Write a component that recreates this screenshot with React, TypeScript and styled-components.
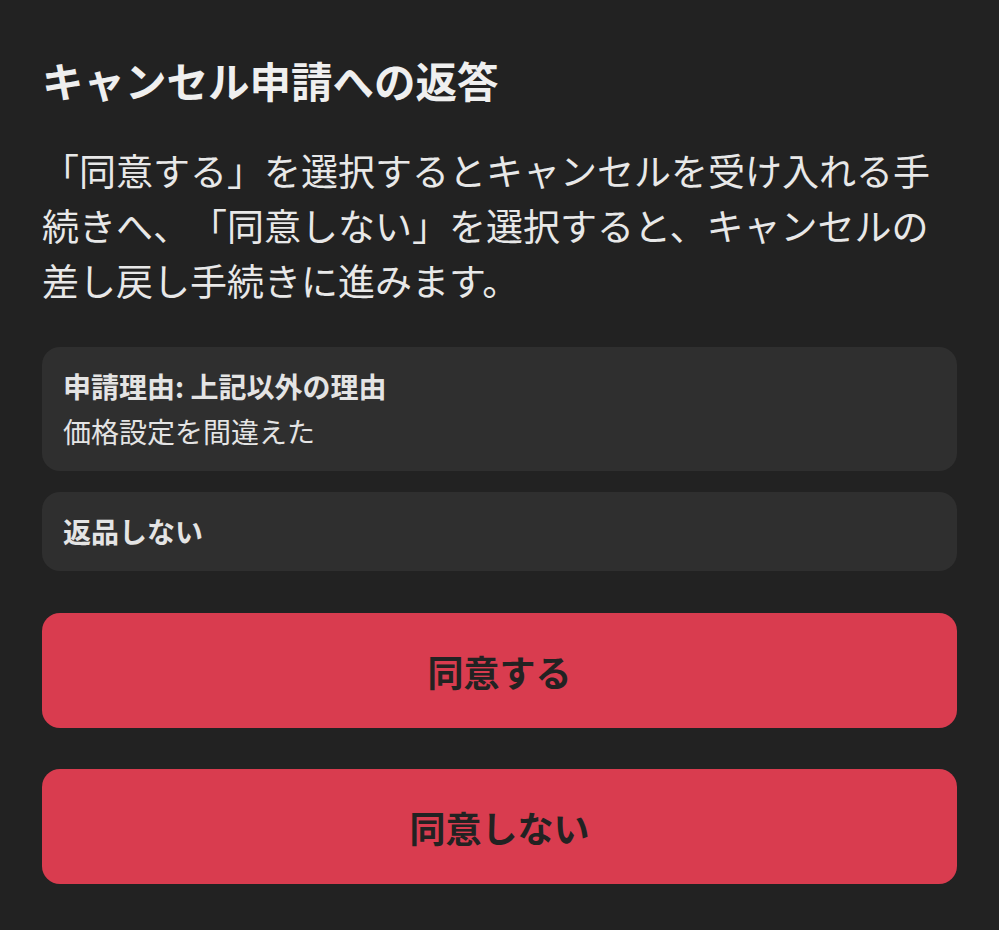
import React from "react";
import styled, { createGlobalStyle } from "styled-components";

const GlobalStyle = createGlobalStyle`
  html, body {
    margin: 0;
    padding: 0;
    background: #222222;
  }
  body {
    font-family: "Noto Sans CJK JP", "Noto Sans", sans-serif;
    color: #ececec;
    text-spacing-trim: space-all;
  }
`;

const Page = styled.div`
  min-height: 930px;
  box-sizing: border-box;
  padding: 56px 42px 40px;
  display: flex;
  flex-direction: column;
`;

const Title = styled.h1`
  margin: 0 0 38px;
  font-size: 41.5px;
  line-height: 49px;
  font-weight: 700;
  color: #efefef;
`;

const Lead = styled.p`
  margin: 0 0 39px;
  font-size: 37px;
  line-height: 55px;
  font-weight: 400;
  color: #e8e8e8;
  text-spacing-trim: space-all;
  font-feature-settings: normal;
`;

const InfoList = styled.div`
  display: flex;
  flex-direction: column;
  gap: 21px;
  margin-bottom: 42px;
`;

const InfoCard = styled.div`
  background: #2f2f2f;
  border-radius: 18px;
  padding: 17px 21px;
  font-size: 28px;
  line-height: 45px;
  color: #e4e4e4;
`;

const Label = styled.div`
  font-weight: 700;
`;

const Detail = styled.div`
  font-weight: 400;
`;

const Actions = styled.div`
  display: flex;
  flex-direction: column;
  gap: 41px;
`;

const ActionButton = styled.button`
  height: 115px;
  border: none;
  border-radius: 18px;
  background: #d93c4f;
  color: #222222;
  font-family: "Noto Sans CJK JP", "Noto Sans", sans-serif;
  font-size: 36px;
  font-weight: 700;
  cursor: pointer;
`;

export default function App() {
  return (
    <>
      <GlobalStyle />
      <Page>
        <Title>キャンセル申請への返答</Title>
        <Lead>
          「同意する」を選択するとキャンセルを受け入れる手続きへ、「同意しない」を選択すると、キャンセルの差し戻し手続きに進みます。
        </Lead>
        <InfoList>
          <InfoCard>
            <Label>申請理由: 上記以外の理由</Label>
            <Detail>価格設定を間違えた</Detail>
          </InfoCard>
          <InfoCard>
            <Label>返品しない</Label>
          </InfoCard>
        </InfoList>
        <Actions>
          <ActionButton>同意する</ActionButton>
          <ActionButton>同意しない</ActionButton>
        </Actions>
      </Page>
    </>
  );
}
